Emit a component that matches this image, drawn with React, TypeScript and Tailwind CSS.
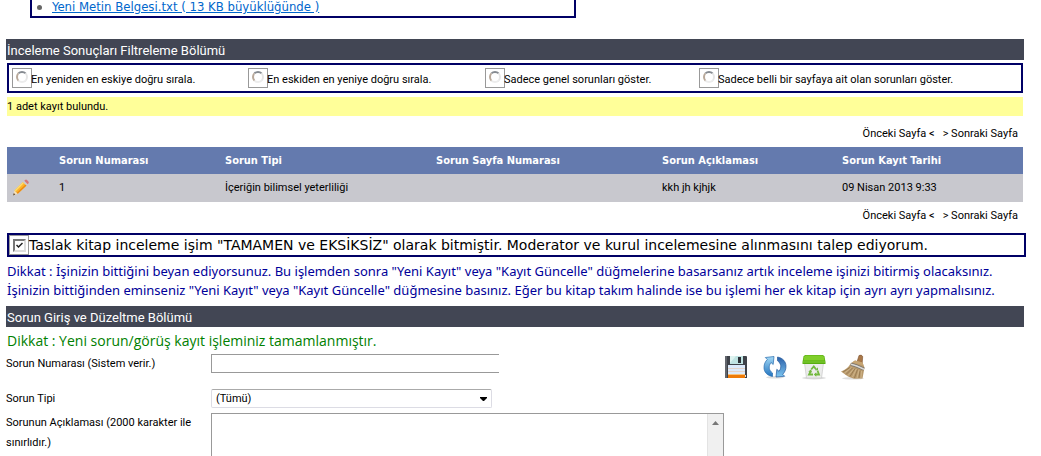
import { ReactNode, useState } from 'react'

const SANS = "font-[Roboto,'DejaVu_Sans_Condensed',sans-serif]"

const filters = [
  { id: 'newest', label: 'En yeniden en eskiye doğru sırala.' },
  { id: 'oldest', label: 'En eskiden en yeniye doğru sırala.' },
  { id: 'general', label: 'Sadece genel sorunları göster.' },
  { id: 'page', label: 'Sadece belli bir sayfaya ait olan sorunları göster.' },
]

const issues = [
  { no: '1', type: 'İçeriğin bilimsel yeterliliği', page: '', text: 'kkh jh kjhjk', date: '09 Nisan 2013 9:33' },
]

function SectionTitle({ children }: { children: ReactNode }) {
  return <h2 className="-ml-px -mr-px h-[21px] bg-[#424654] px-px text-[13px] leading-[23px] text-white">{children}</h2>
}

function Pager() {
  return (
    <nav className="flex justify-end gap-2 pr-[5px] text-[11px] leading-4">
      <a href="#prev">Önceki Sayfa &lt;</a>
      <a href="#next">&gt; Sonraki Sayfa</a>
    </nav>
  )
}

function PencilIcon() {
  return (
    <svg width="18" height="18" viewBox="0 0 18 18">
      <path d="M1 16.5 2.5 11.5 5.8 14.8Z" fill="#f6dfb4" />
      <path d="M1 16.5 1.8 14 3.3 15.6Z" fill="#554433" />
      <path d="M2.5 11.5 11 3 14.5 6.4 5.8 14.8Z" fill="#fdb42c" />
      <path d="M2.5 11.5 11 3 12 4 3.6 12.6Z" fill="#ffdc6b" />
      <path d="M4.8 13.8 13.5 5.4 14.5 6.4 5.8 14.8Z" fill="#ee8a10" />
      <path d="M11 3 12.3 1.8 15.7 5.2 14.5 6.4Z" fill="#c9cbd0" />
      <path d="M12.3 1.8 13.4.8Q14.2.3 15 1L16.6 2.7Q17.1 3.5 16.5 4.2L15.7 5.2Z" fill="#d4767a" />
    </svg>
  )
}

function SaveIcon() {
  return (
    <svg width="24" height="24" viewBox="0 0 24 24">
      <path d="M1 1H22.5L23 1.5V23H1Z" fill="#3e4249" />
      <path d="M1 1H3V23H1Z" fill="#62666d" />
      <rect x="6" y="1" width="13" height="8" fill="#bfe3e2" />
      <path d="M6 1H12L6 8Z" fill="#def3f0" />
      <rect x="14" y="2" width="3" height="6" fill="#2d3036" />
      <rect x="4" y="10" width="17" height="10" fill="#dceafb" />
      <path d="M4 13.5H21M4 16.5H21" stroke="#e3d3c8" />
      <rect x="4" y="19" width="17" height="1" fill="#f8c27a" />
      <rect x="4" y="20" width="17" height="3" fill="#ee7b08" />
      <rect x="21" y="20" width="1" height="2" fill="#dfe2e5" />
    </svg>
  )
}

function RefreshIcon() {
  return (
    <svg width="24" height="24" viewBox="0 0 24 24">
      <defs>
        <linearGradient id="arrowLight" x1="0" y1="0" x2="0" y2="1">
          <stop offset="0" stopColor="#a3d9f6" />
          <stop offset="1" stopColor="#2374bf" />
        </linearGradient>
        <linearGradient id="arrowDark" x1="0" y1="0" x2="0" y2="1">
          <stop offset="0" stopColor="#2a5fa8" />
          <stop offset="1" stopColor="#7cc6f1" />
        </linearGradient>
      </defs>
      <ellipse cx="12" cy="22.3" rx="9" ry="1.2" fill="#dedede" />
      <path d="M9.5 21.5C4 20.5 1 17 1 12.5 1 9 2.300 6.500 4.300 4.500L2.300 2.500 11 1.500 10.200 9.500 8 7.500C5 11.500 6 15.500 9.500 18Z" fill="url(#arrowLight)" stroke="#286cae" strokeWidth=".7" />
      <path d="M14.5 2C20 3 23 6.8 23 11.3 23 14.8 21.700 17.300 19.700 19.300L21.700 21.300 13 22 13.800 14.300 16 16.300C19 12.300 18 8.300 14.500 5.700Z" fill="url(#arrowDark)" stroke="#245a9c" strokeWidth=".7" />
    </svg>
  )
}

function RecycleIcon() {
  return (
    <svg width="26" height="26" viewBox="0 0 26 26">
      <ellipse cx="13" cy="24" rx="12" ry="1.5" fill="#dedede" />
      <path d="M3.500 9H22.500L20.500 24H5.500Z" fill="#ececec" stroke="#c9c9c9" strokeWidth=".7" />
      <path d="M2.5 2.5 4 1H22L23.5 2.5 24.5 8V10H1.5V8Z" fill="#58ad10" />
      <path d="M3 3 4.5 1.5H21.5L23 3 23.5 6.5H2.5Z" fill="#80cf2b" />
      <path d="M2 8H24" stroke="#86d33a" />
      <g fill="none" stroke="#72b83e" strokeWidth="1.8">
        <path d="M10.2 15.5 12.8 12.5 15.2 15.5" />
        <path d="M16.5 16.5 18 20.5H14.5" />
        <path d="M12 20.5H8L9.5 17.5" />
      </g>
      <path d="M14.2 16.5 17 16V13.2ZM15.3 18.3 12.8 20.5 15.3 22.7ZM7.3 17.5 10 15.5 11.2 18.5Z" fill="#72b83e" />
    </svg>
  )
}

function BroomIcon() {
  return (
    <svg width="26" height="26" viewBox="0 0 26 26">
      <ellipse cx="13" cy="24.3" rx="11" ry="1.2" fill="#dedede" />
      <path d="M19 1.500Q21.500 .3 22.700 2.500L22.200 9 17 8Z" fill="#a97848" stroke="#7c4f2b" strokeWidth=".6" />
      <path d="M15 6.500 22.500 8.500 24.500 13.500 22.500 24.500 14 24.800 8 22.500 1 17.5Q8 15 10.500 9.500Z" fill="#b99a6c" />
      <path d="M15 6.500 22.500 8.500 23.500 11.500 12 8.500Z" fill="#c7a573" />
      <path d="M10.800 10.300Q16 11.500 24 15.200" fill="none" stroke="#77726c" strokeWidth="3" />
      <path d="M10.800 10.300Q16 11.500 24 15.200" fill="none" stroke="#dddad6" strokeWidth="1.600" />
      <path d="M10 13.500 3 18M12.500 14 6 20.5M15 14.5 10 22.5M17.5 15.5 14.5 24M20 16.5 19 24" stroke="#8b6f48" strokeWidth=".7" />
      <path d="M11.500 13.5 4.5 19M14 14.5 8 21.5M16.3 15 12.5 23M19 16 17 24M21.5 17 21 24" stroke="#dcc59c" strokeWidth=".6" />
    </svg>
  )
}

const actions = [
  { name: 'Kaydet', icon: <SaveIcon /> },
  { name: 'Yenile', icon: <RefreshIcon /> },
  { name: 'Sil', icon: <RecycleIcon /> },
  { name: 'Temizle', icon: <BroomIcon /> },
]

export default function App() {
  const [filter, setFilter] = useState('')
  const [done, setDone] = useState(true)

  return (
    <div className={`h-screen overflow-hidden bg-white pl-[7px] pr-[18px] text-black ${SANS}`}>
      {/* attachments */}
      <div className="ml-[23px] h-[18px] w-[546px] border-2 border-t-0 border-[#000066]">
        <ul className="pl-[5px] font-['DejaVu_Sans_Condensed','DejaVu_Sans',sans-serif] text-[13px] leading-[14px]">
          <li className="flex items-center gap-[10px]">
            <span className="size-[5px] rounded-full bg-[#666]" />
            <a href="#file" className="text-[#0066cc] underline">Yeni Metin Belgesi.txt ( 13 KB büyüklüğünde )</a>
          </li>
        </ul>
      </div>

      {/* filters */}
      <div className="mt-[21px]">
        <SectionTitle>İnceleme Sonuçları Filtreleme Bölümü</SectionTitle>
      </div>
      <div className="mt-[3px] grid h-[30px] grid-cols-[236fr_237fr_214fr_322fr] items-center border-2 border-[#000066] pl-[3px] text-[11px]">
        {filters.map((f) => (
          <label key={f.id} className="flex items-center">
            <span className="flex size-5 items-start justify-center border border-[#999] pt-[2px]">
              <input
                type="radio"
                name="filter"
                checked={filter === f.id}
                onChange={() => setFilter(f.id)}
                className="size-[12px] appearance-none rounded-full border-2 border-t-[#868b91] border-r-[#e6e6e6] border-b-[#ececec] border-l-[#b9a99a] bg-white checked:bg-[#333]"
              />
            </span>
            <span className="-ml-px pt-1 leading-4">{f.label}</span>
          </label>
        ))}
      </div>

      <p className="mt-1 bg-[#ffff99] text-[11px] leading-[19px]">1 adet kayıt bulundu.</p>

      <div className="pt-[10px] pb-[5px]">
        <Pager />
      </div>
      <table className="w-full table-fixed border-collapse text-left text-[11px]">
        <colgroup>
          <col className="w-[46px]" />
          <col className="w-[166px]" />
          <col className="w-[211px]" />
          <col className="w-[226px]" />
          <col className="w-[180px]" />
          <col />
        </colgroup>
        <thead className="font-['DejaVu_Sans_Condensed','DejaVu_Sans',sans-serif]">
          <tr className="h-[27px] bg-[#647aae] text-white">
            <th />
            <th className="px-[6px] pt-[2px]">Sorun Numarası</th>
            <th className="px-[6px] pt-[2px]">Sorun Tipi</th>
            <th className="px-[6px] pt-[2px]">Sorun Sayfa Numarası</th>
            <th className="px-[6px] pt-[2px]">Sorun Açıklaması</th>
            <th className="px-[6px] pt-[2px]">Sorun Kayıt Tarihi</th>
          </tr>
        </thead>
        <tbody>
          {issues.map((i) => (
            <tr key={i.no} className="h-7 bg-[#c8c8ce]">
              <td className="pl-[5px]">
                <button type="button" aria-label="Düzenle" className="block">
                  <PencilIcon />
                </button>
              </td>
              <td className="px-[6px] pt-px">{i.no}</td>
              <td className="px-[6px] pt-px">{i.type}</td>
              <td className="px-[6px] pt-px">{i.page}</td>
              <td className="px-[6px] pt-px">{i.text}</td>
              <td className="px-[6px] pt-px">{i.date}</td>
            </tr>
          ))}
        </tbody>
      </table>
      <div className="pt-[6px] pb-[9px]">
        <Pager />
      </div>

      {/* completion statement */}
      <label className="-mr-[3px] flex h-6 items-center border-2 border-[#000066] font-['DejaVu_Sans',sans-serif] text-[14px]">
        <span className="flex size-5 items-center justify-center border border-[#999]">
          <input
            type="checkbox"
            checked={done}
            onChange={() => setDone(!done)}
            className="peer size-[13px] appearance-none border-2 border-t-[#777] border-r-[#ddd] border-b-[#ddd] border-l-[#777] bg-white"
          />
          <svg className="pointer-events-none absolute hidden peer-checked:block" width="7" height="7" viewBox="0 0 7 7">
            <path d="M.5 3 2.5 5 6.5 1" fill="none" stroke="#222" strokeWidth="1.5" />
          </svg>
        </span>
        Taslak kitap inceleme işim "TAMAMEN ve EKSİKSİZ" olarak bitmiştir. Moderator ve kurul incelemesine alınmasını talep ediyorum.
      </label>
      <p className="mt-[5px] font-['Noto_Sans',sans-serif] text-[13px] leading-[19px] text-[#000099]">
        Dikkat : İşinizin bittiğini beyan ediyorsunuz. Bu işlemden sonra "Yeni Kayıt" veya "Kayıt Güncelle" düğmelerine basarsanız artık inceleme işinizi bitirmiş olacaksınız.
        <br />
        İşinizin bittiğinden eminseniz "Yeni Kayıt" veya "Kayıt Güncelle" düğmesine basınız. Eğer bu kitap takım halinde ise bu işlemi her ek kitap için ayrı ayrı yapmalısınız.
      </p>

      {/* entry form */}
      <div className="mt-[6px]">
        <SectionTitle>Sorun Giriş ve Düzeltme Bölümü</SectionTitle>
      </div>
      <p className="pt-1 font-['Open_Sans',sans-serif] text-[14px] leading-5 text-[#008000]">Dikkat : Yeni sorun/görüş kayıt işleminiz tamamlanmıştır.</p>
      <form className="-ml-px mt-[3px] grid grid-cols-[205px_1fr] text-[11px] leading-5" onSubmit={(e) => e.preventDefault()}>
        <label htmlFor="issue-no">Sorun Numarası (Sistem verir.)</label>
        <div className="flex h-[35px] items-start">
          <input id="issue-no" className="h-[19px] w-[288px] border border-r-0 border-[#999] px-1" />
          <div className="ml-[224px] flex gap-[13px]">
            {actions.map((a) => (
              <button key={a.name} type="button" aria-label={a.name} className="flex size-[26px] items-center justify-center">
                {a.icon}
              </button>
            ))}
          </div>
        </div>
        <label htmlFor="issue-type">Sorun Tipi</label>
        <div className="relative h-6 w-[281px]">
          <select id="issue-type" className="block h-[19px] w-full appearance-none rounded-xs border border-[#dcdce4] border-t-[#aaa] bg-white pl-1 text-[11px] leading-4">
            <option>(Tümü)</option>
          </select>
          <svg className="pointer-events-none absolute top-2 right-[5px]" width="7" height="4" viewBox="0 0 7 4">
            <path d="M0 0H7V1L4 4H3L0 1Z" fill="#000" />
          </svg>
        </div>
        <label htmlFor="issue-text" className="pr-4">Sorunun Açıklaması (2000 karakter ile sınırlıdır.)</label>
        <div className="relative w-[513px]">
          <textarea id="issue-text" className="block h-[100px] w-full resize-none border border-[#999] p-1 pr-5" />
          <div className="absolute top-px right-px bottom-px w-4 border-l border-[#e3e3e3] bg-[#f0f0f0]">
            <svg className="mx-auto mt-[7px]" width="7" height="4" viewBox="0 0 7 4">
              <path d="M3.5 0 7 4H0Z" fill="#777" />
            </svg>
          </div>
        </div>
      </form>
    </div>
  )
}
